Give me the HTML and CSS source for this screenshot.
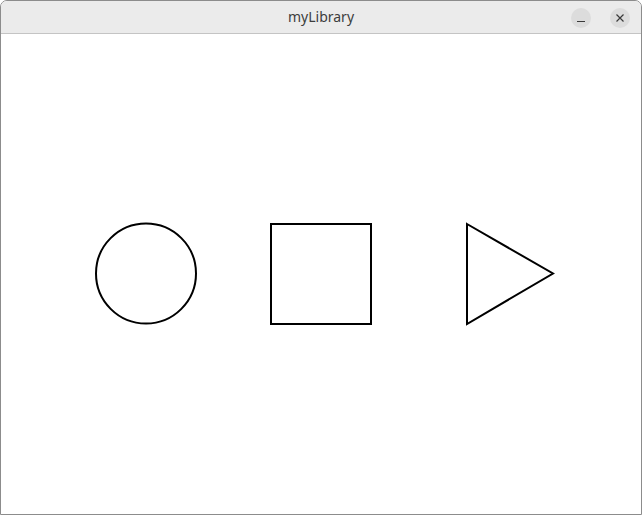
FILE: index.html
```html
<!DOCTYPE html>
<html>
<head>
<meta charset="utf-8">
<title>myLibrary</title>
<link rel="stylesheet" href="styles.css">
</head>
<body>
<div class="window">
  <header class="titlebar">
    <span class="title">myLibrary</span>
    <div class="controls">
      <button class="ctl" aria-label="Minimize">
        <svg width="20" height="20" viewBox="0 0 20 20"><line x1="6" y1="13.5" x2="14" y2="13.5" stroke="#3a3a3a" stroke-width="1.2"/></svg>
      </button>
      <button class="ctl" aria-label="Close">
        <svg width="20" height="20" viewBox="0 0 20 20"><path d="M6.5 6.5 L13.5 13.5 M13.5 6.5 L6.5 13.5" stroke="#3a3a3a" stroke-width="1.2" fill="none"/></svg>
      </button>
    </div>
  </header>
  <main class="canvas">
    <svg class="shapes" width="640" height="480" viewBox="0 0 640 480">
      <circle cx="145" cy="239.5" r="50" fill="none" stroke="#000" stroke-width="2"/>
      <rect x="270" y="190" width="100" height="100" fill="none" stroke="#000" stroke-width="2"/>
      <polygon points="466,190 552,239.5 466,290" fill="none" stroke="#000" stroke-width="2" stroke-linejoin="miter"/>
    </svg>
  </main>
</div>
</body>
</html>
```
FILE: styles.css
```css
html, body {
  margin: 0;
  padding: 0;
  background: #ffffff;
}
.window {
  width: 640px;
  height: 513px;
  border: 1px solid #8c8c8c;
  border-radius: 7px 7px 0 0;
  overflow: hidden;
  display: flex;
  flex-direction: column;
  background: #fff;
}
.titlebar {
  height: 32px;
  flex: none;
  background: #ebebeb;
  border-bottom: 1px solid #c4c4c4;
  position: relative;
  display: flex;
  align-items: center;
  justify-content: center;
}
.title {
  font-family: "Noto Sans", "DejaVu Sans", sans-serif;
  font-size: 14px;
  color: #3d3d3d;
  margin-top: -1px;
}
.controls {
  position: absolute;
  right: 11px;
  top: 7px;
  display: flex;
  gap: 19px;
}
.ctl {
  width: 20px;
  height: 20px;
  border-radius: 50%;
  border: none;
  padding: 0;
  background: #dcdcdc;
  display: flex;
  align-items: center;
  justify-content: center;
}
.canvas {
  flex: 1;
  background: #fff;
}
.shapes {
  display: block;
}
```
